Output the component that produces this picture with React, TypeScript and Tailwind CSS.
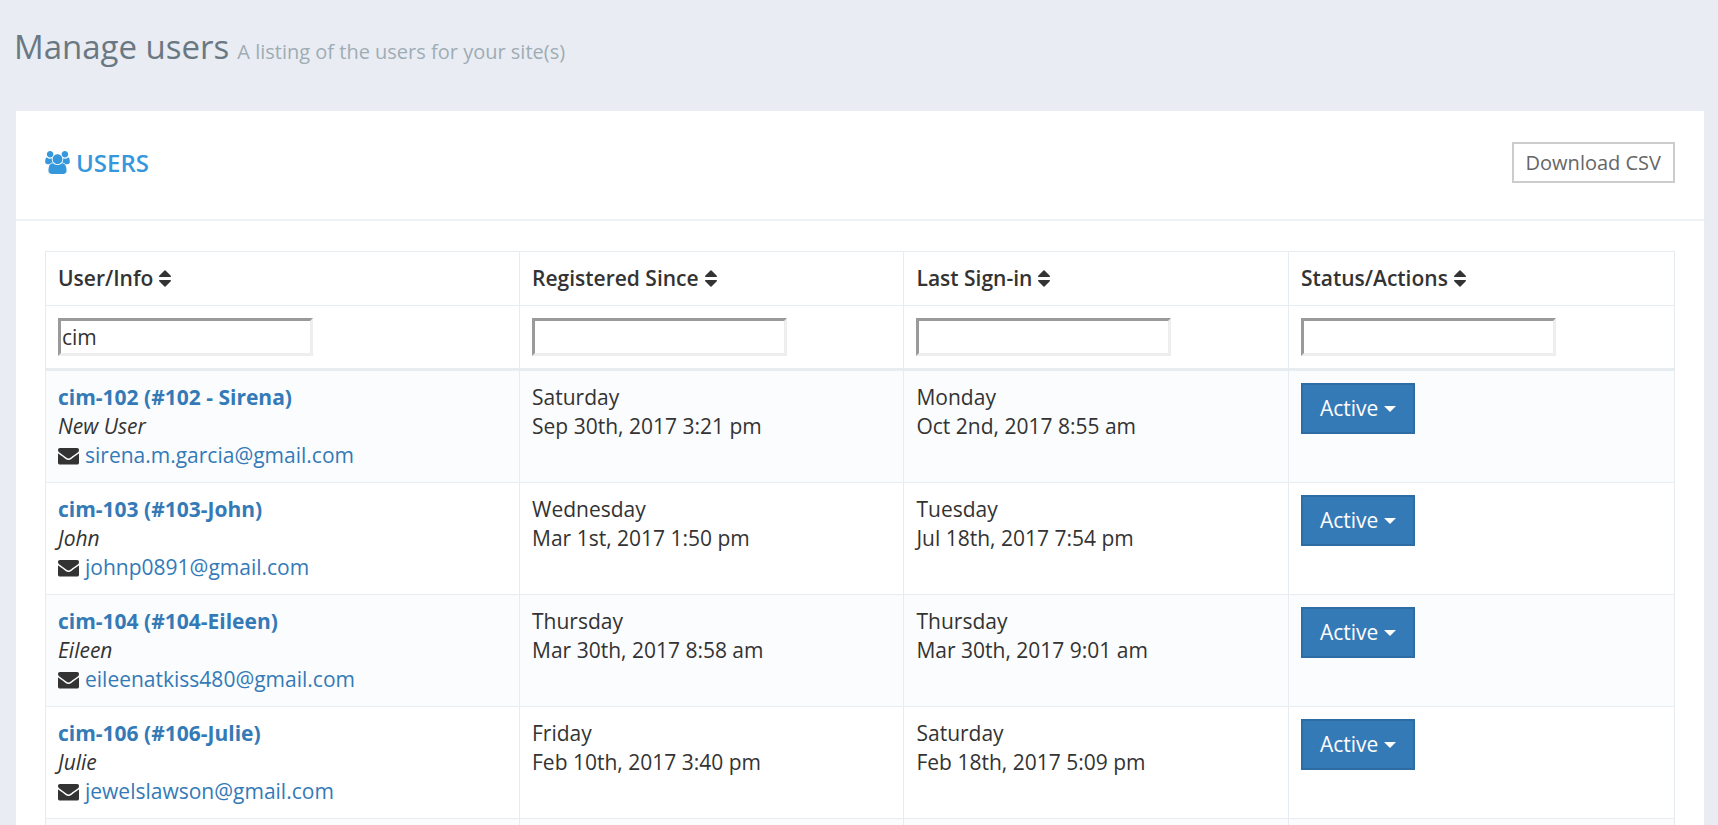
import { useState } from "react";

type IconProps = { className?: string };

function UsersIcon({ className }: IconProps) {
  return (
    <svg viewBox="0 0 1920 1792" fill="currentColor" aria-hidden="true" className={className}>
      <path d="M593 896q-162 5-265 128h-134q-82 0-138-40.500t-56-118.500q0-353 124-353 6 0 43.500 21t97.500 42.500 119 21.500q67 0 133-23-5 37-5 66 0 139 81 256zM1664 1533q0 120-73 189.500t-194 69.500h-874q-121 0-194-69.500t-73-189.500q0-53 3.500-103.500t14-109 26.500-108.500 43-97.500 62-81 85.500-53.500 111.500-20q10 0 43 21.500t73 48 107 48 135 21.500 135-21.500 107-48 73-48 43-21.500q61 0 111.500 20t85.500 53.500 62 81 43 97.500 26.500 108.500 14 109 3.500 103.500zM640 256q0 106-75 181t-181 75-181-75-75-181 75-181 181-75 181 75 75 181zM1344 640q0 159-112.500 271.500t-271.500 112.500-271.500-112.500-112.500-271.500 112.500-271.500 271.500-112.500 271.500 112.500 112.500 271.500zM1920 865q0 78-56 118.500t-138 40.500h-134q-103-123-265-128 81-117 81-256 0-29-5-66 66 23 133 23 59 0 119-21.500t97.500-42.500 43.500-21q124 0 124 353zM1792 256q0 106-75 181t-181 75-181-75-75-181 75-181 181-75 181 75 75 181z" />
    </svg>
  );
}

function EnvelopeIcon({ className }: IconProps) {
  return (
    <svg viewBox="0 0 1792 1792" fill="currentColor" aria-hidden="true" className={className}>
      <path d="M1792 710v794q0 66-47 113t-113 47h-1472q-66 0-113-47t-47-113v-794q44 49 101 87 362 246 497 345 57 42 92.500 65.500t94.500 48 110 24.500h2q51 0 110-24.500t94.500-48 92.500-65.500q170-123 498-345 57-39 100-87zM1792 416q0 79-49 151t-122 123q-376 261-468 325-10 7-42.500 30.500t-54 38-52 32.500-57.500 27-50 9h-2q-23 0-50-9t-57.500-27-52-32.500-54-38-42.500-30.500q-91-64-262-182.500t-205-142.500q-62-42-117-115.500t-55-136.500q0-78 41.500-130t118.500-52h1472q65 0 112.500 47t47.500 113z" />
    </svg>
  );
}

function SortIcon({ className }: IconProps) {
  return (
    <svg viewBox="0 0 1024 1792" fill="currentColor" aria-hidden="true" className={className}>
      <path d="M1024 1088q0 26-19 45l-448 448q-19 19-45 19t-45-19l-448-448q-19-19-19-45t19-45 45-19h896q26 0 45 19t19 45zM1024 704q0 26-19 45t-45 19h-896q-26 0-45-19t-19-45 19-45l448-448q19-19 45-19t45 19l448 448q19 19 19 45z" />
    </svg>
  );
}

function CaretIcon({ className }: IconProps) {
  return (
    <svg viewBox="0 0 12 6" fill="currentColor" aria-hidden="true" className={className}>
      <path d="M0 0h12L6 6z" />
    </svg>
  );
}

const columns = [
  { label: "User/Info", width: "w-[29.1%]" },
  { label: "Registered Since", width: "w-[23.6%]" },
  { label: "Last Sign-in", width: "w-[23.6%]" },
  { label: "Status/Actions", width: "w-[23.7%]" },
];

const users = [
  {
    login: "cim-102 (#102 - Sirena)",
    name: "New User",
    email: "sirena.m.garcia@gmail.com",
    registered: ["Saturday", "Sep 30th, 2017 3:21 pm"],
    signIn: ["Monday", "Oct 2nd, 2017 8:55 am"],
  },
  {
    login: "cim-103 (#103-John)",
    name: "John",
    email: "johnp0891@gmail.com",
    registered: ["Wednesday", "Mar 1st, 2017 1:50 pm"],
    signIn: ["Tuesday", "Jul 18th, 2017 7:54 pm"],
  },
  {
    login: "cim-104 (#104-Eileen)",
    name: "Eileen",
    email: "eileenatkiss480@gmail.com",
    registered: ["Thursday", "Mar 30th, 2017 8:58 am"],
    signIn: ["Thursday", "Mar 30th, 2017 9:01 am"],
  },
  {
    login: "cim-106 (#106-Julie)",
    name: "Julie",
    email: "jewelslawson@gmail.com",
    registered: ["Friday", "Feb 10th, 2017 3:40 pm"],
    signIn: ["Saturday", "Feb 18th, 2017 5:09 pm"],
  },
];

const cell = "border border-[#e7ecf1] p-3 text-left align-top";

export default function App() {
  const [filters, setFilters] = useState(["cim", "", "", ""]);

  return (
    <div className="h-screen overflow-hidden bg-[#e9ecf3] px-[14px] font-['Open_Sans',sans-serif] text-[21px] leading-[29px] text-[#333]">
      <header className="flex h-[111px] items-baseline gap-2 pt-6">
        <h1 className="text-[33px] leading-[46px] text-[#697882]">Manage users</h1>
        <p className="text-[20px] text-[#9eacb4]">A listing of the users for your site(s)</p>
      </header>

      <main className="ml-[2px] bg-white">
        <div className="flex h-[110px] items-start justify-between border-b-2 border-[#eef1f5] px-[29px] pt-[31px]">
          <h2 className="flex h-[41px] items-center gap-[6px] text-[24px] font-semibold text-[#3598dc]">
            <UsersIcon className="h-[23px] w-[25px]" />
            USERS
          </h2>
          <button
            type="button"
            className="h-[41px] border-2 border-[#ccc] px-3 text-[20px] leading-[37px] text-[#666]"
          >
            Download CSV
          </button>
        </div>

        <div className="px-[29px] pt-[30px]">
          <table className="w-full table-fixed border-collapse border border-[#e7ecf1]">
            <thead>
              <tr>
                {columns.map((column) => (
                  <th key={column.label} scope="col" className={`${cell} ${column.width} font-semibold`}>
                    <span className="flex items-center gap-[6px]">
                      {column.label}
                      <SortIcon className="h-[21px] w-3" />
                    </span>
                  </th>
                ))}
              </tr>
              <tr className="border-b-3 border-[#e7ecf1]">
                {columns.map((column, index) => (
                  <td key={column.label} className="border-x border-[#e7ecf1] p-3">
                    <input
                      type="text"
                      aria-label={`Filter by ${column.label}`}
                      value={filters[index]}
                      onChange={(event) =>
                        setFilters(filters.map((value, i) => (i === index ? event.target.value : value)))
                      }
                      className="block h-[38px] w-[255px] max-w-full border-3 border-t-[#9a9a9a] border-r-[#eee] border-b-[#eee] border-l-[#9a9a9a] bg-white px-[1px] outline-none"
                    />
                  </td>
                ))}
              </tr>
            </thead>
            <tbody>
              {users.map((user) => (
                <tr key={user.login} className="odd:bg-[#fbfcfd]">
                  <td className={cell}>
                    <a href="#user" className="block font-bold text-[#337ab7]">
                      {user.login}
                    </a>
                    <em className="block">{user.name}</em>
                    <span className="flex items-center gap-[6px]">
                      <EnvelopeIcon className="size-[21px]" />
                      <a href={`mailto:${user.email}`} className="text-[#337ab7]">
                        {user.email}
                      </a>
                    </span>
                  </td>
                  <td className={cell}>
                    {user.registered.map((line) => (
                      <div key={line}>{line}</div>
                    ))}
                  </td>
                  <td className={cell}>
                    {user.signIn.map((line) => (
                      <div key={line}>{line}</div>
                    ))}
                  </td>
                  <td className={cell}>
                    <button
                      type="button"
                      aria-haspopup="menu"
                      className="flex h-[51px] items-center gap-[6px] border-2 border-[#2e6da4] bg-[#337ab7] px-[17px] text-white"
                    >
                      Active
                      <CaretIcon className="h-[6px] w-3" />
                    </button>
                  </td>
                </tr>
              ))}
              <tr className="odd:bg-[#fbfcfd]">
                {columns.map((column) => (
                  <td key={column.label} className={cell} />
                ))}
              </tr>
            </tbody>
          </table>
        </div>
      </main>
    </div>
  );
}
